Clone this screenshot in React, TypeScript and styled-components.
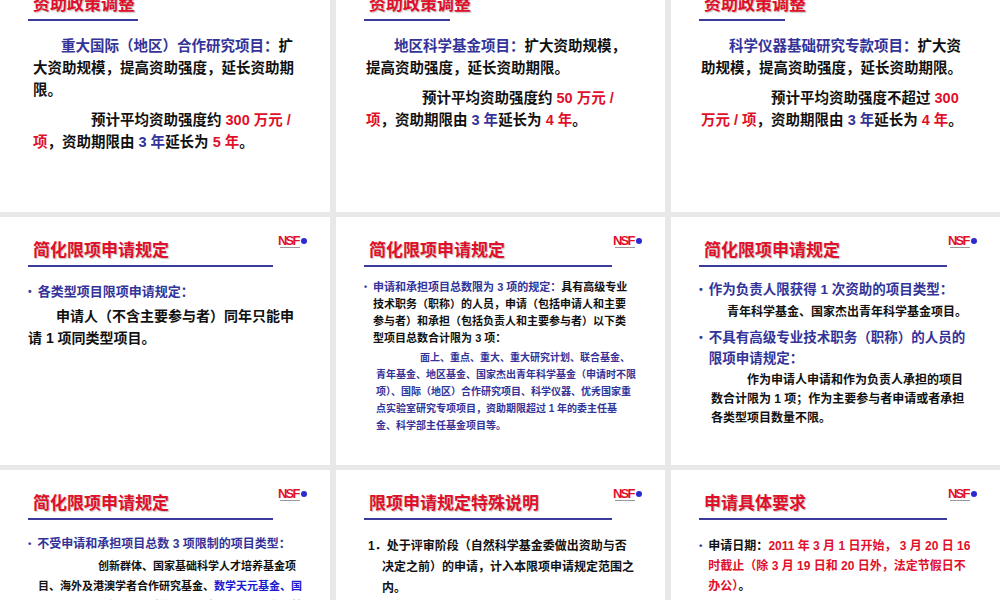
import React from "react";
import styled, { createGlobalStyle } from "styled-components";

const Global = createGlobalStyle`
  html, body { margin: 0; padding: 0; background: #e8e8e8; overflow: hidden; }
  body { font-family: "Liberation Sans", "Noto Sans CJK SC", sans-serif; }
`;

const Grid = styled.div`
  display: grid;
  grid-template-columns: 330px 329px 329px;
  grid-auto-rows: 248px;
  column-gap: 6px;
  row-gap: 5px;
  margin-top: -36px;
  width: 1000px;
`;

const Slide = styled.div<{ $top?: number }>`
  background: #fff;
  position: relative;
  padding: ${p => p.$top ?? 24}px 20px 0 28px;
  box-sizing: border-box;
  overflow: hidden;
`;

const Title = styled.div`
  font-size: 17px;
  font-weight: 700;
  color: #e0102a;
  text-shadow: 1px 1px 1px rgba(120, 120, 120, 0.45);
  padding-left: 5px;
  line-height: 20px;
`;

const Rule = styled.div<{ $w: number }>`
  width: ${p => p.$w}px;
  height: 2px;
  background: #3b3b9c;
  margin: 4px 0 0 0;
`;

const LogoWrap = styled.div`
  position: absolute;
  right: 20px;
  top: 17px;
`;

const Body = styled.div<{ $size?: number; $lh?: number; $top?: number; $left?: number }>`
  margin-top: ${p => p.$top ?? 16}px;
  padding-left: ${p => p.$left ?? 0}px;
  padding-right: 8px;
  font-size: ${p => p.$size ?? 14}px;
  line-height: ${p => p.$lh ?? 24}px;
  font-weight: 700;
  color: #111;
`;

const Para = styled.p<{ $indent?: number; $color?: string; $size?: number; $lh?: number }>`
  margin: 0 0 4px 0;
  text-indent: ${p => p.$indent ?? 0}px;
  color: ${p => p.$color ?? "inherit"};
  font-size: ${p => (p.$size ? p.$size + "px" : "inherit")};
  line-height: ${p => (p.$lh ? p.$lh + "px" : "inherit")};
`;

const Bullet = styled.div<{ $color?: string }>`
  display: flex;
  gap: 6px;
  color: ${p => p.$color ?? "inherit"};
  margin-bottom: 2px;
  &::before {
    content: "•";
    color: #3b3b9c;
    font-size: 0.8em;
  }
`;

const Blue = styled.span`
  color: #333399;
`;
const Red = styled.span`
  color: #e0102a;
`;

const Logo = () => (
  <LogoWrap>
    <svg width="32" height="15" viewBox="0 0 32 15">
      <text x="0" y="11" fontSize="13" fontWeight="900" fill="#e0102a" fontFamily="Liberation Sans, sans-serif" letterSpacing="-1.8">NSF</text>
      <circle cx="26" cy="7" r="3" fill="#2a2ad0" />
      <rect x="2" y="13" width="20" height="1" fill="#999" />
    </svg>
  </LogoWrap>
);

const Head = ({ text, w = 245, logo = true }: { text: string; w?: number; logo?: boolean }) => (
  <>
    {logo && <Logo />}
    <Title>{text}</Title>
    <Rule $w={w} />
  </>
);

export default function App() {
  return (
    <>
      <Global />
      <Grid>
        <Slide $top={31}>
          <Head text="资助政策调整" w={110} logo={false} />
          <Body $size={14.5} $lh={22} $top={14} $left={5}>
            <Para $indent={28} style={{ marginBottom: 8 }}>
              <Blue>重大国际（地区）合作研究项目：</Blue>扩大资助规模，提高资助强度，延长资助期限。
            </Para>
            <Para $indent={58}>
              预计平均资助强度约 <Red>300 万元 / 项</Red>，资助期限由 <Blue>3 年</Blue>延长为 <Red>5 年</Red>。
            </Para>
          </Body>
        </Slide>
        <Slide $top={31}>
          <Head text="资助政策调整" w={86} logo={false} />
          <Body $size={14.5} $lh={22} $top={14} $left={2}>
            <Para $indent={28} style={{ marginBottom: 8 }}>
              <Blue>地区科学基金项目：</Blue>扩大资助规模，提高资助强度，延长资助期限。
            </Para>
            <Para $indent={56}>
              预计平均资助强度约 <Red>50 万元 / 项</Red>，资助期限由 <Blue>3 年</Blue>延长为 <Red>4 年</Red>。
            </Para>
          </Body>
        </Slide>
        <Slide $top={31}>
          <Head text="资助政策调整" w={86} logo={false} />
          <Body $size={14.5} $lh={22} $top={14} $left={2}>
            <Para $indent={28} style={{ marginBottom: 8 }}>
              <Blue>科学仪器基础研究专款项目：</Blue>扩大资助规模，提高资助强度，延长资助期限。
            </Para>
            <Para $indent={70}>
              预计平均资助强度不超过 <Red>300 万元 / 项</Red>，资助期限由 <Blue>3 年</Blue>延长为 <Red>4 年</Red>。
            </Para>
          </Body>
        </Slide>

        <Slide>
          <Head text="简化限项申请规定" />
          <Body $size={13} $lh={22} $top={14}>
            <Bullet $color="#333399">各类型项目限项申请规定：</Bullet>
            <Para $indent={28} $size={14}>
              申请人（不含主要参与者）同年只能申请 1 项同类型项目。
            </Para>
          </Body>
        </Slide>
        <Slide>
          <Head text="简化限项申请规定" w={248} />
          <Body $size={11} $lh={17} $top={12}>
            <Bullet>
              <span>
                <Blue>申请和承担项目总数限为 3 项的规定：</Blue>具有高级专业技术职务（职称）的人员，申请（包括申请人和主要参与者）和承担（包括负责人和主要参与者）以下类型项目总数合计限为 3 项：
              </span>
            </Bullet>
            <Para $indent={44} $color="#333399" $size={10} style={{ paddingLeft: 12 }}>
              面上、重点、重大、重大研究计划、联合基金、青年基金、地区基金、国家杰出青年科学基金（申请时不限项）、国际（地区）合作研究项目、科学仪器、优秀国家重点实验室研究专项项目，资助期限超过 1 年的委主任基金、科学部主任基金项目等。
            </Para>
          </Body>
        </Slide>
        <Slide>
          <Head text="简化限项申请规定" w={248} />
          <Body $size={13.5} $lh={21} $top={12}>
            <Bullet $color="#333399">作为负责人限获得 1 次资助的项目类型：</Bullet>
            <Para $indent={18} $size={12} style={{ paddingLeft: 10 }}>
              青年科学基金、国家杰出青年科学基金项目。
            </Para>
            <Bullet $color="#333399">不具有高级专业技术职务（职称）的人员的限项申请规定：</Bullet>
            <Para $indent={36} $size={12} $lh={19} style={{ paddingLeft: 12 }}>
              作为申请人申请和作为负责人承担的项目数合计限为 1 项；作为主要参与者申请或者承担各类型项目数量不限。
            </Para>
          </Body>
        </Slide>

        <Slide>
          <Head text="简化限项申请规定" />
          <Body $size={12} $lh={20} $top={14}>
            <Bullet $color="#333399">不受申请和承担项目总数 3 项限制的项目类型：</Bullet>
            <Para $indent={60} $size={11} style={{ paddingLeft: 10 }}>
              创新群体、国家基础科学人才培养基金项目、海外及港澳学者合作研究基金、<Blue style={{ color: "#1a1ad0" }}>数学天元基金、国际（地区）交流项目</Blue>、科普项目、重点学术期刊专项基金项目。
            </Para>
          </Body>
        </Slide>
        <Slide>
          <Head text="限项申请规定特殊说明" w={248} />
          <Body $size={12} $lh={21} $top={16}>
            <Para style={{ paddingLeft: 18, textIndent: -14 }}>
              1．处于评审阶段（自然科学基金委做出资助与否决定之前）的申请，计入本限项申请规定范围之内。
            </Para>
            <Para style={{ paddingLeft: 18, textIndent: -14 }}>
              2．申请人即使受聘于多个依托单位，通过不同依托单位申请和承担项目，其申请和承担项目数量仍受限项规定限制。
            </Para>
          </Body>
        </Slide>
        <Slide>
          <Head text="申请具体要求" w={248} />
          <Body $size={12} $lh={20} $top={16}>
            <Bullet>
              <span>
                申请日期：<Red>2011 年 3 月 1 日开始， 3 月 20 日 16 时截止（除 3 月 19 日和 20 日外，法定节假日不办公）</Red>。
              </span>
            </Bullet>
            <Bullet>随时受理的国际（地区）合作研究与交流等类型项目申请。</Bullet>
          </Body>
        </Slide>
      </Grid>
    </>
  );
}
